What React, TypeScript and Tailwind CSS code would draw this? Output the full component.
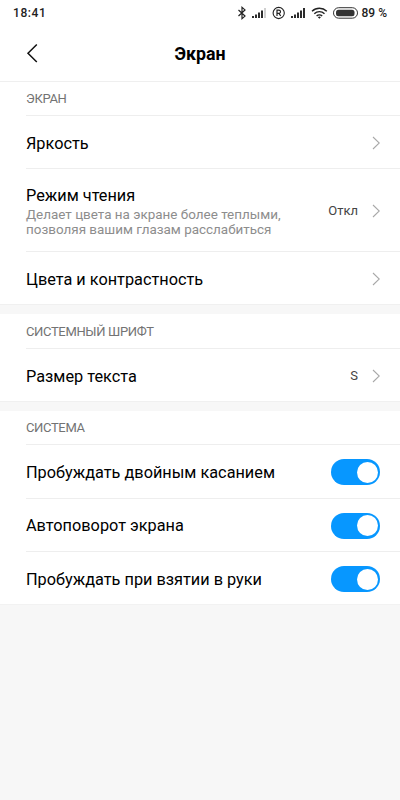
import type { ReactNode } from 'react';
import { useState } from 'react';

export default function DisplaySettingsPage() {
  const [doubleTap, setDoubleTap] = useState(true);
  const [autoRotate, setAutoRotate] = useState(true);
  const [raiseToWake, setRaiseToWake] = useState(true);

  return (
    <div className="min-h-screen w-full bg-[#f7f7f7] font-[Roboto,sans-serif] text-black">
      <div className="h-[82px] border-b border-[#efefef] bg-white">
        <StatusBar />
        <header className="grid h-14 grid-cols-[1fr_auto_1fr] items-center pl-[26px]">
          <button aria-label="Назад" className="w-fit">
            <svg width="12" height="20" viewBox="0 0 12 20" fill="none" stroke="#111" strokeWidth="1.5">
              <path d="M10.800 1.500 2 10.300l8.800 8.700" />
            </svg>
          </button>
          <h1 className="pt-px pr-[26px] text-[17.800px] leading-6 font-bold">Экран</h1>
        </header>
      </div>

      <Section title="Экран">
        <Row title="Яркость" />
        <Row
          title="Режим чтения"
          description="Делает цвета на экране более теплыми, позволяя вашим глазам расслабиться"
          value="Откл"
        />
        <Row title="Цвета и контрастность" last />
      </Section>

      <Divider />

      <Section title="Системный шрифт" spaced>
        <Row title="Размер текста" value="S" last />
      </Section>

      <Divider />

      <Section title="Система">
        <Row title="Пробуждать двойным касанием">
          <Toggle checked={doubleTap} onChange={setDoubleTap} />
        </Row>
        <Row title="Автоповорот экрана">
          <Toggle checked={autoRotate} onChange={setAutoRotate} />
        </Row>
        <Row title="Пробуждать при взятии в руки" last>
          <Toggle checked={raiseToWake} onChange={setRaiseToWake} />
        </Row>
      </Section>
      <div className="h-px bg-[#f2f2f2]" />
    </div>
  );
}

function StatusBar() {
  return (
    <div className="flex h-[25px] items-center pr-[13px] pl-[13px] text-[12px] font-medium text-[#222]">
      <span className="tracking-[0.600px]">18:41</span>
      <svg className="ml-auto" width="122" height="16" viewBox="0 0 122 16" fill="none">
        {/* bluetooth */}
        <path d="m2.500 5 6.500 6.100-3 2.600V2.300l3 2.600L2.500 11" stroke="#222" strokeWidth="1.200" />
        {/* first sim */}
        <path d="M17 13v-2M20 13V9.500M23 13V7.500M26 13V5.500" stroke="#222" strokeWidth="1.900" />
        <path d="M29 13V3" stroke="#c8c8c8" strokeWidth="1.700" />
        {/* roaming */}
        <circle cx="42.700" cy="8" r="5.600" stroke="#222" strokeWidth="1.100" />
        <path d="M41 11V5.200h1.900a1.600 1.600 0 0 1 0 3.200H41m2 0 1.700 2.600" stroke="#222" strokeWidth="1.200" />
        {/* second sim */}
        <path d="M56 13v-2M59 13V9.500M62 13V7.500M65 13V5.500M68 13V3" stroke="#222" strokeWidth="1.900" />
        {/* wifi */}
        <path d="M76 6.200a10.800 10.800 0 0 1 14.800 0M78.300 8.700a7.300 7.300 0 0 1 10.200 0M80.600 11.100a4 4 0 0 1 5.600 0" stroke="#222" strokeWidth="1.400" />
        <path d="m81.900 12.200 1.500 1.600 1.500-1.600a2.200 2.200 0 0 0-3 0Z" fill="#222" />
        {/* battery */}
        <rect x="97.500" y="2.700" width="24" height="10.500" rx="5.200" stroke="#333" />
        <rect x="100" y="4.700" width="18.500" height="6.500" rx="2.500" fill="#333" />
      </svg>
      <span className="ml-[4px] text-[12px]">89 %</span>
    </div>
  );
}

function Divider() {
  return <div className="h-2.5 border-t border-[#f0f0f0] bg-[#f7f7f7]" />;
}

interface SectionProps {
  title: string;
  spaced?: boolean;
  children: ReactNode;
}

function Section({ title, spaced, children }: SectionProps) {
  return (
    <section className="bg-white">
      <div className="pl-[26px]">
        <h2
          className={`flex items-center border-b border-[#eee] text-[13px] tracking-[-0.350px] text-[#737373] uppercase ${spaced ? 'h-[35px] pt-px' : 'h-[34px] pt-px'}`}
        >
          {title}
        </h2>
      </div>
      {children}
    </section>
  );
}

interface RowProps {
  title: string;
  description?: string;
  value?: string;
  last?: boolean;
  children?: ReactNode;
}

function Row({ title, description, value, last, children }: RowProps) {
  const height = description
    ? 'h-[83px]'
    : last
      ? 'h-[52px]'
      : children
        ? 'h-[53.500px]'
        : 'h-[53px]';

  return (
    <div className="pl-[26px]">
      <div
        className={`flex items-center justify-between pt-[2px] pr-5 ${height} ${last ? '' : 'border-b border-[#eee]'}`}
      >
        <div className={description ? '' : 'pt-px'}>
          <h3 className="text-[16.300px] leading-5">{title}</h3>
          {description && (
            <p className="w-[270px] pt-px text-[13.450px] leading-[15px] text-[#8d8d8d]">{description}</p>
          )}
        </div>
        {children ?? (
          <div className="flex items-center gap-[14px]">
            {value && <span className="text-[13px] text-[#444]">{value}</span>}
            <svg width="8" height="14" viewBox="0 0 8 14" fill="none" stroke="#a8a8a8" strokeWidth="1.100">
              <path d="m1 1 6.300 6L1 13" />
            </svg>
          </div>
        )}
      </div>
    </div>
  );
}

interface ToggleProps {
  checked: boolean;
  onChange: (checked: boolean) => void;
}

function Toggle({ checked, onChange }: ToggleProps) {
  return (
    <button
      role="switch"
      aria-checked={checked}
      onClick={() => onChange(!checked)}
      className={`flex h-[26px] w-[49px] items-center rounded-full px-[2px] ${checked ? 'justify-end bg-[#0797ff]' : 'justify-start bg-[#dcdcdc]'}`}
    >
      <span className="size-[21px] rounded-full bg-white" />
    </button>
  );
}
